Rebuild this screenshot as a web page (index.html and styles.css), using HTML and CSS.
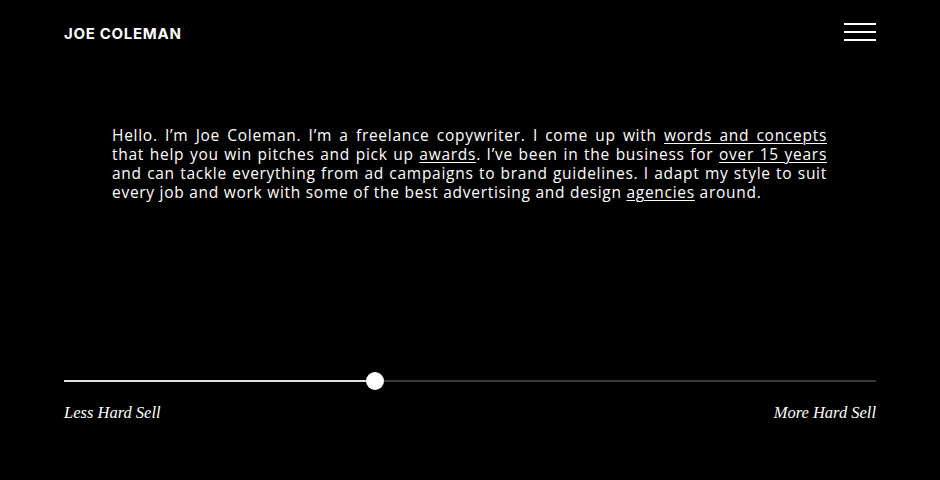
FILE: index.html
```html
<!DOCTYPE html>
<html>
<head>
<meta charset="utf-8">
<link rel="stylesheet" href="styles.css">
</head>
<body>
<div class="page">
  <header class="header">
    <div class="logo">JOE COLEMAN</div>
    <button class="menu" aria-label="Menu"><span></span><span></span><span></span></button>
  </header>
  <main class="intro">
    <p>Hello. I’m Joe Coleman. I’m a freelance copywriter. I come up with <a href="#">words and concepts</a> that help you win pitches and pick up <a href="#">awards</a>. I’ve been in the business for <a href="#">over 15 years</a> and can tackle everything from ad campaigns to brand guidelines. I adapt my style to suit every job and work with some of the best advertising and design <a href="#">agencies</a> around.</p>
  </main>
  <section class="slider">
    <div class="track">
      <div class="fill"></div>
      <div class="thumb"></div>
    </div>
    <div class="labels">
      <span>Less Hard Sell</span>
      <span>More Hard Sell</span>
    </div>
  </section>
</div>
</body>
</html>
```
FILE: styles.css
```css
html, body {
  margin: 0;
  padding: 0;
  background: #000;
  color: #fff;
}
.page {
  width: 940px;
  height: 480px;
  padding: 0 64px;
  box-sizing: border-box;
  display: flex;
  flex-direction: column;
}
.header {
  display: flex;
  justify-content: space-between;
  align-items: center;
  height: 66px;
}
.logo {
  font-family: "Inter", "Liberation Sans", sans-serif;
  font-weight: 700;
  font-size: 15px;
  letter-spacing: 0.7px;
  padding-top: 1px;
}
.menu {
  width: 32px;
  height: 18px;
  padding: 0;
  border: 0;
  background: none;
  display: flex;
  flex-direction: column;
  justify-content: space-between;
  margin-top: -2px;
}
.menu span {
  display: block;
  height: 2px;
  width: 32px;
  background: #fff;
}
.intro {
  padding: 60px 49px 0 48px;
  height: 247px;
  box-sizing: border-box;
}
.intro p {
  margin: 0;
  font-family: "Open Sans", sans-serif;
  font-weight: 500;
  font-size: 15.5px;
  line-height: 19px;
  letter-spacing: 0.72px;
  text-align: justify;
  color: #fff;
}
.intro a {
  color: #fff;
  text-decoration: underline;
  text-decoration-thickness: 1px;
  text-underline-offset: 2px;
}
.track {
  position: relative;
  height: 2px;
  background: #3a3a3a;
  margin-top: 67px;
}
.fill {
  width: 311px;
  height: 2px;
  background: #e0e0e0;
}
.thumb {
  position: absolute;
  left: 302px;
  top: -8px;
  width: 18px;
  height: 18px;
  border-radius: 50%;
  background: #fff;
}
.labels {
  display: flex;
  justify-content: space-between;
  margin-top: 21px;
  font-family: "Liberation Serif", serif;
  font-style: italic;
  font-size: 16.5px;
  color: #fff;
}
```
